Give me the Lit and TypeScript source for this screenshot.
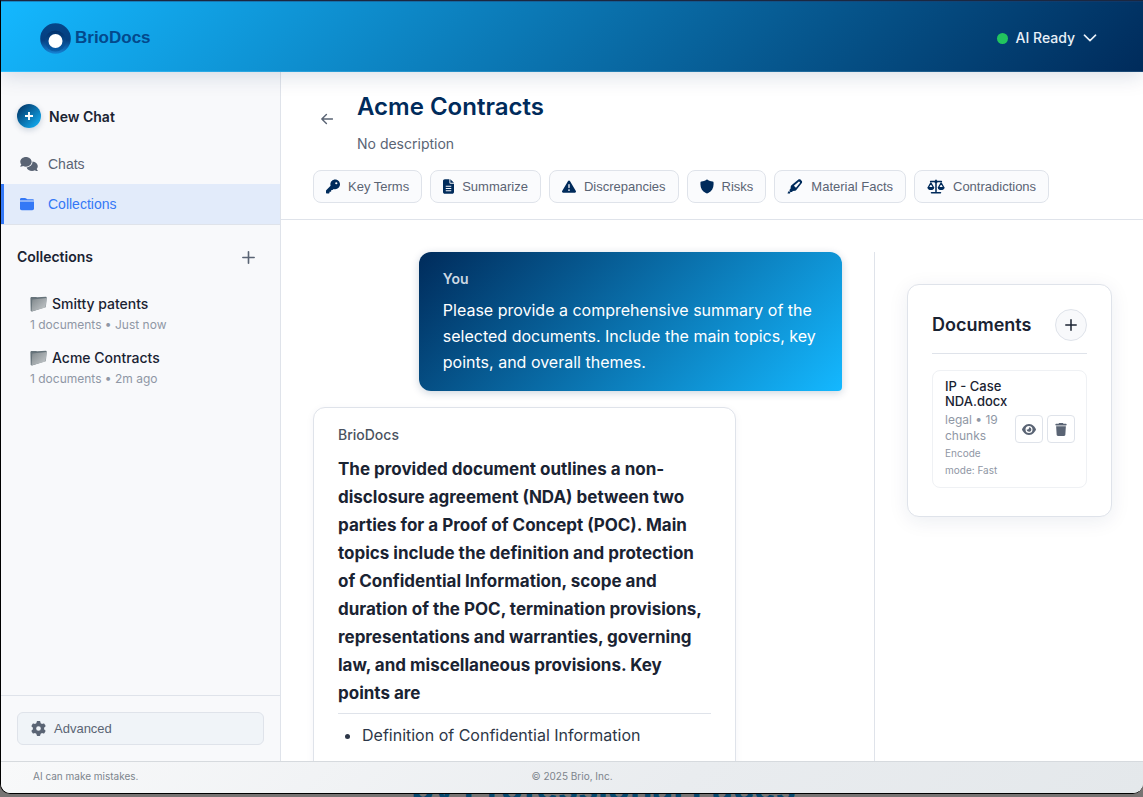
import { LitElement, html, css, svg } from "lit";
import { customElement, state } from "lit/decorators.js";

type Glyph = { box: string; body: unknown };

const GLYPHS: Record<string, Glyph> = {
  comments: {
    box: "0 0 640 512",
    body: svg`<path d="M208 352c114.900 0 208-78.800 208-176S322.900 0 208 0S0 78.800 0 176c0 38.600 14.700 74.300 39.600 103.400c-3.500 9.400-8.700 17.700-14.200 24.700c-4.800 6.200-9.700 11-13.300 14.300c-1.800 1.600-3.300 2.900-4.300 3.700C1 327.200-1.400 334.400 .8 340.900S9.100 352 16 352c21.800 0 43.800-5.600 62.100-12.500c9.200-3.500 17.800-7.400 25.200-11.400C134.100 343.300 169.800 352 208 352zM448 176c0 112.300-99.100 196.900-216.500 207C255.800 457.400 336.400 512 432 512c38.200 0 73.900-8.700 104.700-23.900c7.500 4 16 7.900 25.200 11.400c18.300 6.900 40.300 12.500 62.100 12.500c6.900 0 13.100-4.500 15.200-11.100c2.100-6.600-.2-13.800-5.800-17.900c-1-.8-2.500-2-4.300-3.700c-3.600-3.300-8.500-8.100-13.300-14.300c-5.500-7-10.700-15.400-14.200-24.700c24.900-29 39.600-64.700 39.600-103.400c0-92.800-84.900-168.900-192.600-175.500c.4 5.100 .6 10.300 .6 15.500z"/>`,
  },
  folder: {
    box: "0 0 512 512",
    body: svg`<path d="M448 480H64c-35.300 0-64-28.700-64-64V160H512V416c0 35.300-28.700 64-64 64zM512 128H0V80C0 50 28.700 32 64 32H180c20 0 36 8 48 22l14 14c7 8 16 12 26 12H456c32 0 56 16 56 48z"/>`,
  },
  key: {
    box: "0 0 512 512",
    body: svg`<path d="M336 352c97.200 0 176-78.800 176-176S433.200 0 336 0S160 78.800 160 176c0 18.700 2.900 36.800 8.300 53.700L7 391c-4.500 4.500-7 10.600-7 17v80c0 13.300 10.700 24 24 24h80c13.300 0 24-10.700 24-24V448h40c13.300 0 24-10.700 24-24V384h40c6.400 0 12.500-2.500 17-7l33.300-33.300c16.900 5.400 35 8.300 53.700 8.300zM376 96a40 40 0 1 1 0 80 40 40 0 1 1 0-80z"/>`,
  },
  file: {
    box: "0 0 384 512",
    body: svg`<path fill-rule="evenodd" d="M64 0C28.700 0 0 28.700 0 64V448c0 35.300 28.700 64 64 64H320c35.300 0 64-28.700 64-64V160H256c-17.700 0-32-14.300-32-32V0H64zM256 0V128H384L256 0zM96 230H288V262H96zM96 310H288V342H96zM96 390H288V422H96z"/>`,
  },
  warning: {
    box: "0 0 512 512",
    body: svg`<path d="M256 32c14.200 0 27.300 7.500 34.500 19.800l216 368c7.300 12.400 7.300 27.700 .2 40.100S486.300 480 472 480H40c-14.300 0-27.600-7.700-34.700-20.100s-7-27.800 .2-40.100l216-368C228.700 39.500 241.800 32 256 32zm0 128c-13.300 0-24 10.700-24 24V296c0 13.300 10.700 24 24 24s24-10.700 24-24V184c0-13.300-10.700-24-24-24zm32 224a32 32 0 1 0 -64 0 32 32 0 1 0 64 0z"/>`,
  },
  shield: {
    box: "0 0 512 512",
    body: svg`<path d="M256 4c12 0 20 5 30 12c48 34 106 52 172 54c24 1 38 14 38 38v72c0 132-66 242-196 318c-30 16-58 16-88 0C82 422 16 312 16 180v-72c0-24 14-37 38-38c66-2 124-20 172-54c10-7 18-12 30-12z"/>`,
  },
  marker: {
    box: "0 0 16 16",
    body: svg`<path fill-rule="evenodd" d="M11.300 .9c.9-.7 2-.7 2.800 0l.9.9c.8.800.8 1.900.1 2.800L9.400 11.800c-.3.4-.7.600-1.200.7l-2.400.3-1.100 1H3l-.8-.8v-1.600l1-1.100.3-2.500c.1-.4.3-.8.700-1.100zM11.900 2.900 6.800 7.100l2.200 2.200 4.200-5.100c.2-.2.2-.5 0-.7l-.6-.6c-.2-.2-.5-.2-.7 0zM1.400 12.800l1.800 1.800-.7.800H.3c-.3 0-.4-.4-.2-.6z"/>`,
  },
  scales: {
    box: "0 0 20 16",
    body: svg`<g fill="none" stroke="currentColor" stroke-width="1.700" stroke-linecap="round" stroke-linejoin="round"><path d="M4 2.500H16M10 1v13.800M5 14.900H15"/><path d="M4.300 4 1.300 9.300H7.300zM15.700 4l-3 5.300h6z" stroke-width="1.400"/></g><path d="M.5 9h7.600c-.3 2-1.800 3-3.800 3S.8 11 .5 9zM11.900 9h7.600c-.3 2-1.800 3-3.800 3s-3.500-1-3.800-3z"/><circle cx="10" cy="2.800" r="1.700"/>`,
  },
  gear: {
    box: "0 0 512 512",
    body: svg`<path d="M495.900 166.600c3.200 8.700 .5 18.400-6.400 24.600l-43.300 39.400c1.100 8.300 1.700 16.800 1.700 25.400s-.6 17.100-1.700 25.400l43.300 39.400c6.900 6.200 9.600 15.900 6.400 24.600c-4.400 11.900-9.700 23.300-15.800 34.300l-4.700 8.100c-6.600 11-14 21.400-22.100 31.200c-5.900 7.200-15.700 9.600-24.500 6.800l-55.700-17.700c-13.400 10.300-28.200 18.900-44 25.400l-12.500 57.100c-2 9.100-9 16.300-18.200 17.800c-13.800 2.300-28 3.500-42.500 3.500s-28.700-1.200-42.500-3.500c-9.200-1.500-16.200-8.700-18.200-17.800l-12.500-57.100c-15.800-6.500-30.600-15.100-44-25.400L83.100 425.900c-8.800 2.800-18.600 .3-24.500-6.800c-8.100-9.800-15.500-20.200-22.100-31.200l-4.700-8.100c-6.100-11-11.400-22.400-15.800-34.300c-3.200-8.700-.5-18.400 6.400-24.600l43.300-39.400C64.600 273.100 64 264.600 64 256s.6-17.100 1.700-25.400L22.400 191.200c-6.900-6.200-9.600-15.900-6.400-24.600c4.400-11.900 9.700-23.300 15.800-34.300l4.700-8.100c6.600-11 14-21.400 22.100-31.200c5.900-7.200 15.700-9.600 24.500-6.800l55.700 17.700c13.400-10.300 28.200-18.900 44-25.400l12.500-57.100c2-9.100 9-16.300 18.200-17.800C227.300 1.200 241.500 0 256 0s28.700 1.200 42.500 3.500c9.200 1.500 16.200 8.700 18.200 17.800l12.500 57.100c15.800 6.500 30.600 15.100 44 25.400l55.700-17.700c8.800-2.800 18.600-.3 24.500 6.800c8.100 9.800 15.500 20.200 22.100 31.200l4.700 8.100c6.100 11 11.400 22.400 15.800 34.300zM256 336a80 80 0 1 0 0-160 80 80 0 1 0 0 160z"/>`,
  },
  eye: {
    box: "0 0 576 512",
    body: svg`<path d="M288 32c-80.800 0-145.500 36.800-192.600 80.600C48.600 156 17.300 208 2.500 243.700c-3.300 7.900-3.300 16.700 0 24.600C17.300 304 48.600 356 95.400 399.400C142.500 443.200 207.200 480 288 480s145.500-36.800 192.600-80.600c46.800-43.500 78.100-95.400 93-131.100c3.300-7.900 3.300-16.700 0-24.600c-14.900-35.700-46.200-87.700-93-131.100C433.500 68.800 368.800 32 288 32zM144 256a144 144 0 1 1 288 0 144 144 0 1 1 -288 0zm144-64c0 35.300-28.700 64-64 64c-7.100 0-13.900-1.200-20.300-3.300c-5.500-1.800-11.900 1.600-11.700 7.400c.3 6.900 1.300 13.800 3.200 20.700c13.700 51.200 66.400 81.600 117.600 67.900s81.600-66.400 67.900-117.600c-11.100-41.500-47.800-69.400-88.600-71.100c-5.800-.2-9.200 6.100-7.400 11.700c2.100 6.400 3.300 13.200 3.300 20.300z"/>`,
  },
  trash: {
    box: "0 0 448 512",
    body: svg`<path d="M135.200 17.700L128 32H32C14.300 32 0 46.300 0 64S14.300 96 32 96H416c17.700 0 32-14.300 32-32s-14.300-32-32-32H320l-7.200-14.300C307.400 6.800 296.300 0 284.200 0H163.800c-12.100 0-23.200 6.800-28.600 17.700zM416 128H32L53.200 467c1.600 25.300 22.600 45 47.900 45H346.900c25.300 0 46.300-19.700 47.900-45L416 128z"/>`,
  },
  plus: {
    box: "0 0 12 12",
    body: svg`<path d="M6 .8V11.200M.8 6H11.200" fill="none" stroke="currentColor" stroke-width="1.500" stroke-linecap="round"/>`,
  },
  boldPlus: {
    box: "0 0 12 12",
    body: svg`<path d="M6 2V10M2 6H10" fill="none" stroke="currentColor" stroke-width="1.900"/>`,
  },
  back: {
    box: "0 0 12 12",
    body: svg`<path d="M5.400 1.400 .8 6l4.600 4.600M.8 6H11.600" fill="none" stroke="currentColor" stroke-width="1.400" stroke-linecap="round" stroke-linejoin="round"/>`,
  },
  chevron: {
    box: "0 0 14 8",
    body: svg`<path d="M1.400 1.200 7 6.600l5.600-5.400" fill="none" stroke="currentColor" stroke-width="1.600" stroke-linecap="round" stroke-linejoin="round"/>`,
  },
};

const icon = (name: string, width: number, height = width) => html`<svg
  class="icon" viewBox=${GLYPHS[name].box} width=${width} height=${height}
  fill="currentColor" aria-hidden="true">${GLYPHS[name].body}</svg>`;

const silverFolder = html`<svg class="icon" viewBox="0 0 17 16" width="17" height="16" aria-hidden="true">
  <defs><linearGradient id="metal" x1="0" y1="0" x2="1" y2="1">
    <stop offset="0" stop-color="#7f878b"/><stop offset="1" stop-color="#c9cdcf"/>
  </linearGradient></defs>
  <path d="M.4 1.900 1 .9h5.200l.8.400L16 .700l.7.600L15.900 11 2 15.600l-1.300-.5z" fill="#66737a"/>
  <path d="M2.300 3.400 16.500 1.900 15.600 11.600 1.500 15.500z" fill="url(#metal)"/>
</svg>`;

@customElement("app-root")
export class AppRoot extends LitElement {
  @state() private section = "Collections";

  private collections = [
    { name: "Smitty patents", meta: "1 documents • Just now" },
    { name: "Acme Contracts", meta: "1 documents • 2m ago" },
  ];

  private actions = [
    { label: "Key Terms", icon: "key", width: 14 },
    { label: "Summarize", icon: "file", width: 11 },
    { label: "Discrepancies", icon: "warning", width: 14 },
    { label: "Risks", icon: "shield", width: 14 },
    { label: "Material Facts", icon: "marker", width: 16 },
    { label: "Contradictions", icon: "scales", width: 18 },
  ];

  static styles = css`
    :host {
      display: block;
      font-family: Inter, "Liberation Sans", sans-serif;
      color: #1a2332;
      --navy: #002b5b;
      --sky: #14b8ff;
      --line: #dfe3ea;
      --muted: #5a6474;
      --faint: #8f97a5;
      --control: "Liberation Sans", Arial, sans-serif;
    }
    * { box-sizing: border-box; }
    button, a { font: inherit; color: inherit; text-decoration: none; cursor: pointer; }
    button { margin: 0; padding: 0; border: 0; background: none; }
    h1, h2, h3, p, ul { margin: 0; padding: 0; }
    .icon { display: block; flex: none; }

    .desktop {
      height: 100vh;
      display: flex;
      flex-direction: column;
      overflow: hidden;
      background: #777473;
    }
    .window {
      flex: 1;
      min-height: 0;
      display: flex;
      flex-direction: column;
      overflow: hidden;
      background: #fff;
      border-left: 1px solid #000;
      border-top: 1px solid #1b2740;
      border-bottom: 1px solid #000;
      border-radius: 0 0 10px 10px;
    }
    .behind {
      height: 3px;
      display: flex;
      align-items: flex-end;
      justify-content: center;
      overflow: hidden;
      padding-left: 64px;
      font-size: 36px;
      line-height: 18px;
      font-weight: 700;
      color: #07496f;
      white-space: nowrap;
    }

    .topbar {
      flex: none;
      height: 71px;
      display: flex;
      align-items: center;
      justify-content: space-between;
      padding: 3px 46px 0 39px;
      color: #e8f0f8;
      background: linear-gradient(135deg, var(--sky), var(--navy));
      border-top: 1px solid #27497a66;
      border-bottom: 1px solid #ffffff1a;
      box-shadow: 0 4px 20px #002b5b26;
      position: relative;
      z-index: 1;
    }
    .brand {
      display: flex;
      align-items: center;
      gap: 4px;
      font: 700 17px/20px var(--control);
      color: #03498c;
    }
    .status { display: flex; align-items: center; gap: 8px; font-size: 14px; line-height: 24px; font-weight: 500; }
    .dot { width: 11px; height: 11px; border-radius: 50%; background: #22c55e; }

    .workspace { flex: 1; min-height: 0; display: flex; }
    .sidebar {
      flex: none;
      width: 280px;
      display: flex;
      flex-direction: column;
      background: #f8f9fb;
      border-right: 1px solid var(--line);
    }
    .menu { padding-top: 24px; border-bottom: 1px solid var(--line); }
    .new-chat {
      display: flex;
      align-items: center;
      gap: 8px;
      height: 40px;
      margin-bottom: 8px;
      padding: 0 16px;
      font-size: 14px;
      font-weight: 600;
    }
    .bubble {
      width: 24px;
      height: 24px;
      display: grid;
      place-items: center;
      border-radius: 50%;
      color: #fff;
      background: linear-gradient(135deg, var(--navy), var(--sky));
      box-shadow: 0 2px 6px #002b5b33;
    }
    .nav {
      display: grid;
      grid-template-columns: 18px 1fr;
      align-items: center;
      gap: 10px;
      height: 40px;
      padding: 0 16px;
      border-left: 3px solid transparent;
      font-family: var(--control);
      font-size: 14px;
      color: var(--muted);
    }
    .nav.on { color: #3478f6; background: #e2ebfa; border-left-color: #3478f6; }
    .list { flex: 1; padding: 16px; }
    .list-head { display: flex; align-items: center; justify-content: space-between; height: 32px; padding-right: 9px; margin-bottom: 19px; }
    .list-head h2 { font-size: 14px; line-height: 20px; font-weight: 600; }
    .list-head button { color: var(--muted); }
    .entry { display: block; padding: 0 13px; height: 54px; }
    .entry-name { display: flex; align-items: center; gap: 5px; font-size: 14px; line-height: 24px; font-weight: 500; }
    .entry-meta { font-size: 12px; line-height: 18px; color: var(--faint); }
    .tools { padding: 16px; border-top: 1px solid var(--line); }
    .advanced {
      width: 100%;
      height: 33px;
      display: flex;
      align-items: center;
      gap: 8px;
      padding: 0 13px;
      border: 1px solid var(--line);
      border-radius: 6px;
      background: #f0f4f8;
      font-family: var(--control);
      font-size: 13px;
      color: var(--muted);
    }

    .main { flex: 1; min-width: 0; display: flex; flex-direction: column; }
    .heading { flex: none; padding: 16px 32px; border-bottom: 1px solid var(--line); }
    .title { display: flex; align-items: center; gap: 22px; }
    .back { width: 22px; height: 32px; padding: 0 0 6px 8px; color: var(--muted); }
    .title h1 { font-size: 24px; line-height: 38px; font-weight: 600; color: var(--navy); }
    .title p { margin-top: 6px; font-size: 14px; line-height: 24px; color: var(--muted); }
    .chips { display: flex; flex-wrap: wrap; gap: 8px; margin-top: 14px; }
    .chip {
      height: 33px;
      display: flex;
      align-items: center;
      gap: 8px;
      padding: 0 12px;
      border: 1px solid var(--line);
      border-radius: 8px;
      background: #fafbfd;
      font-family: var(--control);
      font-size: 13px;
      color: var(--muted);
      white-space: nowrap;
    }
    .chip .icon { color: var(--navy); }

    .content { flex: 1; min-height: 0; display: flex; gap: 32px; padding: 32px 0 0 32px; overflow: hidden; }
    .thread { flex: 1; min-width: 0; display: flex; flex-direction: column; gap: 16px; }
    .message { width: 80%; padding: 16px 24px; border-radius: 12px; font-size: 16px; }
    .message h3 { font-size: 14px; line-height: 22px; font-weight: 500; }
    .mine {
      align-self: flex-end;
      color: #fff;
      background: linear-gradient(135deg, var(--navy), var(--sky));
      border-bottom-right-radius: 4px;
      box-shadow: 0 2px 8px #002b5b33;
    }
    .mine h3 { margin-bottom: 7px; color: #ccd8e4; font-weight: 600; }
    .mine p { line-height: 26px; }
    .reply { padding-bottom: 40px; border: 1px solid var(--line); box-shadow: 0 2px 8px #002b5b0d; background: #fff; }
    .reply h3 { color: #4a5361; }
    .reply h2 {
      margin-top: 9px;
      padding-bottom: 6px;
      border-bottom: 1px solid var(--line);
      font-size: 17px;
      line-height: 28px;
      font-weight: 700;
    }
    .reply ul { padding: 7px 0 0 24px; line-height: 28px; color: #2d3748; }

    .aside { flex: none; width: 269px; padding: 32px 31px 32px 32px; border-left: 1px solid var(--line); }
    .card { padding: 24px; border: 1px solid var(--line); border-radius: 12px; background: #fff; box-shadow: 0 4px 20px #002b5b14; }
    .card-head { display: flex; align-items: center; justify-content: space-between; padding-bottom: 12px; border-bottom: 1px solid var(--line); }
    .card-head h2 { font-size: 18px; line-height: 24px; font-weight: 600; }
    .round { width: 32px; height: 32px; display: grid; place-items: center; border: 1px solid var(--line); border-radius: 50%; background: #f8f9fb; }
    .doc { display: flex; align-items: center; justify-content: space-between; gap: 8px; margin: 16px 0 4px; padding: 8px 12px; border: 1px solid #eff1f4; border-radius: 8px; }
    .doc-name { font-size: 13px; line-height: 15px; font-weight: 500; }
    .doc-meta { margin-top: 3px; font-size: 12px; line-height: 16px; color: var(--faint); }
    .doc-mode { margin-top: 1px; font-size: 10px; line-height: 17px; color: var(--faint); }
    .doc-tools { flex: none; display: flex; gap: 4px; }
    .square { width: 28px; height: 28px; display: grid; place-items: center; border: 1px solid var(--line); border-radius: 4px; color: var(--muted); }

    .footer {
      flex: none;
      height: 32px;
      display: grid;
      grid-template-columns: 1fr auto 1fr;
      align-items: center;
      padding: 0 32px 3px;
      border-top: 1px solid #d6dade;
      background: linear-gradient(135deg, #f8f9fa, #e9ecef 60%, #e4e8eb);
      font-size: 10px;
      line-height: 16px;
      color: #7c848c;
    }
  `;

  private navLink(name: string, glyph: unknown) {
    return html`<a class="nav ${this.section === name ? "on" : ""}" href="#"
      @click=${(e: Event) => { e.preventDefault(); this.section = name; }}>${glyph}<span>${name}</span></a>`;
  }

  render() {
    return html`
      <div class="desktop">
        <div class="window">
          <header class="topbar">
            <a class="brand" href="#">
              <svg class="icon" viewBox="0 0 31 31" width="31" height="31" aria-hidden="true">
                <defs>
                  <linearGradient id="ring" x1="0" y1="0" x2="0" y2="1">
                    <stop offset="0" stop-color="#05468a"/><stop offset=".55" stop-color="#053f80"/><stop offset="1" stop-color="#1583d6"/>
                  </linearGradient>
                  <linearGradient id="core" x1="0" y1="0" x2="0" y2="1">
                    <stop offset="0" stop-color="#02306a"/><stop offset="1" stop-color="#0a60ac"/>
                  </linearGradient>
                </defs>
                <circle cx="15.500" cy="15.500" r="15.300" fill="url(#ring)"/>
                <circle cx="15.500" cy="18" r="10.500" fill="url(#core)"/>
                <circle cx="15.500" cy="18" r="7" fill="#fff"/>
              </svg>
              BrioDocs
            </a>
            <button class="status"><span class="dot"></span>AI Ready${icon("chevron", 14, 8)}</button>
          </header>

          <div class="workspace">
            <aside class="sidebar">
              <nav class="menu">
                <button class="new-chat"><span class="bubble">${icon("boldPlus", 12)}</span>New Chat</button>
                ${this.navLink("Chats", icon("comments", 18, 14))}
                ${this.navLink("Collections", icon("folder", 14))}
              </nav>
              <section class="list">
                <div class="list-head">
                  <h2>Collections</h2>
                  <button aria-label="New collection">${icon("plus", 13)}</button>
                </div>
                ${this.collections.map((c) => html`
                  <a class="entry" href="#">
                    <div class="entry-name">${silverFolder}${c.name}</div>
                    <div class="entry-meta">${c.meta}</div>
                  </a>`)}
              </section>
              <div class="tools"><button class="advanced">${icon("gear", 15)}Advanced</button></div>
            </aside>

            <main class="main">
              <div class="heading">
                <div class="title">
                  <button class="back" aria-label="Back">${icon("back", 12)}</button>
                  <div><h1>Acme Contracts</h1><p>No description</p></div>
                </div>
                <div class="chips">
                  ${this.actions.map((a) => html`<button class="chip">${icon(a.icon, a.width, 15)}${a.label}</button>`)}
                </div>
              </div>
              <div class="content">
                <div class="thread">
                  <article class="message mine">
                    <h3>You</h3>
                    <p>Please provide a comprehensive summary of the selected documents. Include the main topics, key points, and overall themes.</p>
                  </article>
                  <article class="message reply">
                    <h3>BrioDocs</h3>
                    <h2>The provided document outlines a non-disclosure agreement (NDA) between two parties for a Proof of Concept (POC). Main topics include the definition and protection of Confidential Information, scope and duration of the POC, termination provisions, representations and warranties, governing law, and miscellaneous provisions. Key points are</h2>
                    <ul><li>Definition of Confidential Information</li></ul>
                  </article>
                </div>
                <aside class="aside">
                  <section class="card">
                    <div class="card-head">
                      <h2>Documents</h2>
                      <button class="round" aria-label="Add document">${icon("plus", 12)}</button>
                    </div>
                    <div class="doc">
                      <div>
                        <div class="doc-name">IP - Case NDA.docx</div>
                        <div class="doc-meta">legal • 19 chunks</div>
                        <div class="doc-mode">Encode mode: Fast</div>
                      </div>
                      <div class="doc-tools">
                        <button class="square" aria-label="View">${icon("eye", 14, 13)}</button>
                        <button class="square" aria-label="Delete">${icon("trash", 12, 13)}</button>
                      </div>
                    </div>
                  </section>
                </aside>
              </div>
            </main>
          </div>

          <footer class="footer"><span>AI can make mistakes.</span><span>© 2025 Brio, Inc.</span></footer>
        </div>
        <div class="behind">by Professional Faces</div>
      </div>
    `;
  }
}
